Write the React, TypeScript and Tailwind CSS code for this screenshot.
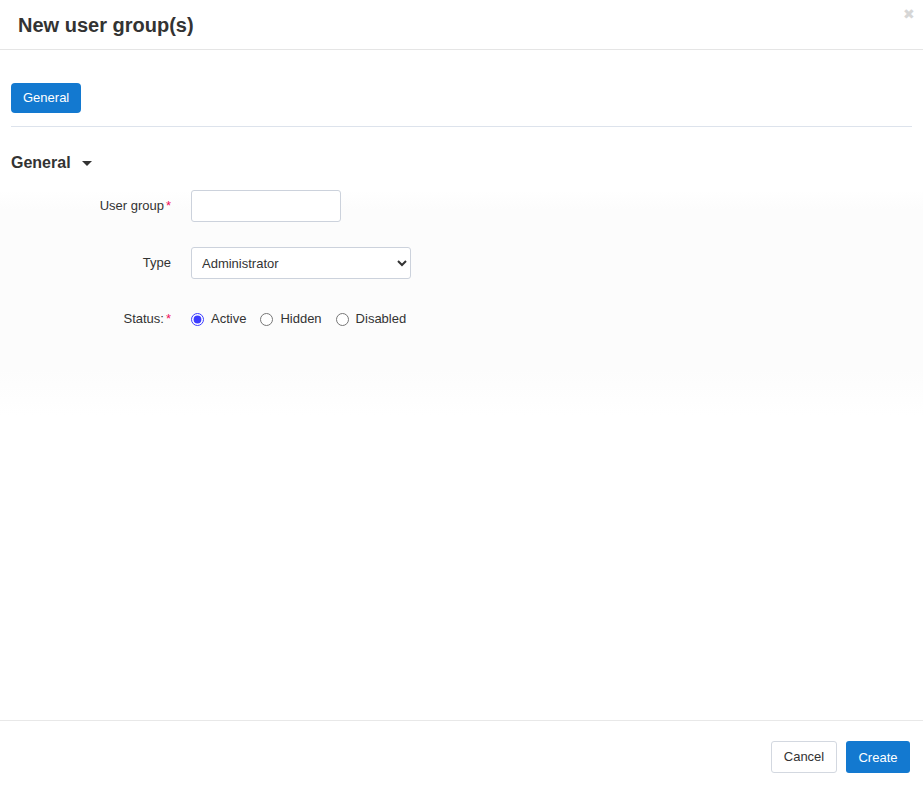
import React from "react";

export default function App() {
  const font = { fontFamily: '"Liberation Sans", Arial, sans-serif' };
  return (
    <div className="w-[923px] h-[789px] bg-white flex flex-col text-[#333]" style={font}>
      <div className="h-[50px] shrink-0 border-b border-[#e5e5e5] flex items-center px-[18px] relative">
        <h1 className="text-[20px] font-bold text-[#333] leading-none">New user group(s)</h1>
        <span className="absolute right-[8px] top-[7px] text-[14px] text-[#d6d6d6] leading-none">✖</span>
      </div>
      <div className="flex-1 flex flex-col pt-[33px]">
        <div className="px-[11px]">
          <button className="h-[30px] px-[12px] rounded-[4px] bg-[#1379d0] text-white text-[13px]">General</button>
          <div className="mt-[13px] border-t border-[#dde3ec]" />
          <div className="mt-[24px] flex items-center gap-[11px]">
            <span className="text-[16px] font-bold text-[#333]">General</span>
            <svg width="10" height="5" viewBox="0 0 10 5"><path d="M0 0h10L5 5z" fill="#333" /></svg>
          </div>
        </div>
        <div className="mt-[15px] pb-[83px] bg-[linear-gradient(to_bottom,#ffffff_0px,#fcfcfc_20px,#fcfcfc_180px,#ffffff_225px)]">
          <div className="flex items-center h-[32px]">
            <label className="w-[171px] text-right text-[13px] text-[#333] pr-0">
              User group<span className="text-[#f0125c] ml-[2px]">*</span>
            </label>
            <input className="ml-[20px] w-[150px] h-[32px] border border-[#ccd2dc] rounded-[3px] bg-white px-2 text-[13px]" />
          </div>
          <div className="flex items-center h-[32px] mt-[25px]">
            <label className="w-[171px] text-right text-[13px] text-[#333]">Type</label>
            <select className="ml-[20px] w-[220px] h-[32px] border border-[#ccd2dc] rounded-[3px] bg-white pl-[6px] pr-[2px] text-[13px] text-[#333]" style={font} defaultValue="Administrator">
              <option>Administrator</option>
              <option>Customer</option>
            </select>
          </div>
          <div className="flex items-center h-[32px] mt-[24px]">
            <label className="w-[171px] text-right text-[13px] text-[#333]">
              Status:<span className="text-[#f0125c] ml-[2px]">*</span>
            </label>
            <div className="ml-[20px] flex items-center text-[13px] text-[#333]">
              <label className="flex items-center">
                <input type="radio" name="status" defaultChecked className="w-[13px] h-[13px] m-0 accent-[#3b3bff]" />
                <span className="ml-[7px]">Active</span>
              </label>
              <label className="flex items-center ml-[14px]">
                <input type="radio" name="status" className="w-[13px] h-[13px] m-0" />
                <span className="ml-[7px]">Hidden</span>
              </label>
              <label className="flex items-center ml-[14px]">
                <input type="radio" name="status" className="w-[13px] h-[13px] m-0" />
                <span className="ml-[7px]">Disabled</span>
              </label>
            </div>
          </div>
        </div>
      </div>
      <div className="h-[69px] shrink-0 border-t border-[#e8e8e8] flex items-center justify-end gap-[9px] pr-[13px] pt-[4px]">
        <button className="h-[32px] w-[66px] border border-[#d3d8e0] rounded-[3px] bg-white text-[13px] text-[#333]">Cancel</button>
        <button className="h-[32px] w-[64px] rounded-[3px] bg-[#1379d0] text-white text-[13px] pt-[2px]">Create</button>
      </div>
    </div>
  );
}
